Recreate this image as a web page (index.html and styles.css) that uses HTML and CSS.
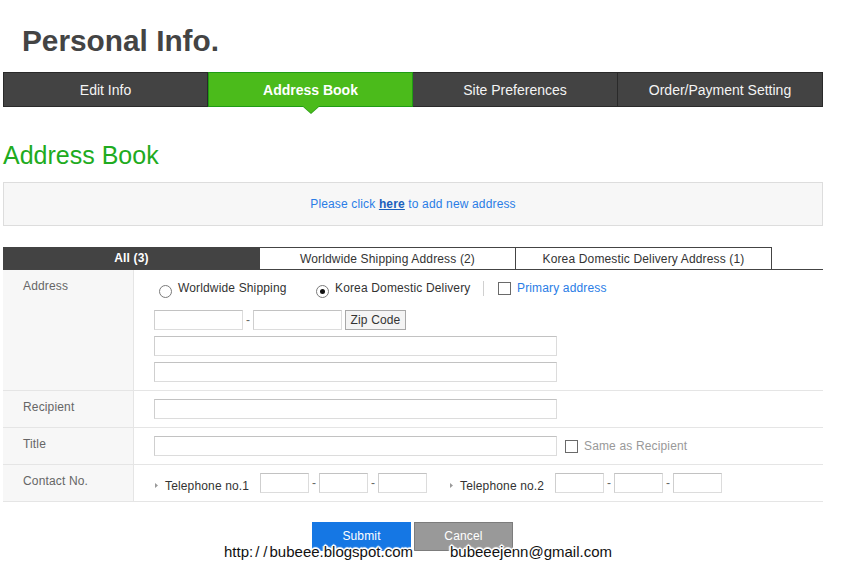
FILE: index.html
```html
<!DOCTYPE html>
<html lang="en">
<head>
<meta charset="utf-8">
<title>Personal Info.</title>
<link rel="stylesheet" href="styles.css">
</head>
<body>
<div class="page">
  <h1 class="title">Personal Info.</h1>
  <nav class="tabs">
    <a class="tab">Edit Info</a>
    <a class="tab active">Address Book</a>
    <a class="tab">Site Preferences</a>
    <a class="tab">Order/Payment Setting</a>
  </nav>

  <h2 class="section-title">Address Book</h2>
  <div class="notice">Please click&nbsp;<a class="here">here</a>&nbsp;to add new address</div>

  <div class="subtabs">
    <div class="subtab active">All (3)</div>
    <div class="subtab">Worldwide Shipping Address (2)</div>
    <div class="subtab">Korea Domestic Delivery Address (1)</div>
  </div>

  <div class="form">
    <div class="row">
      <div class="label">Address</div>
      <div class="field field-address">
        <div class="radio-line">
          <div class="opt opt-ww"><span class="radio"></span><span class="opt-text">Worldwide Shipping</span></div>
          <div class="opt opt-kr"><span class="radio checked"></span><span class="opt-text">Korea Domestic Delivery</span></div>
          <span class="sep"></span>
          <span class="check"></span><span class="primary">Primary address</span>
        </div>
        <div class="line">
          <span class="inp inp-zip"></span><span class="dash">-</span><span class="inp inp-zip"></span>
          <span class="zip-btn">Zip Code</span>
        </div>
        <div class="line"><span class="inp inp-wide"></span></div>
        <div class="line"><span class="inp inp-wide"></span></div>
      </div>
    </div>
    <div class="row">
      <div class="label">Recipient</div>
      <div class="field"><span class="inp inp-wide"></span></div>
    </div>
    <div class="row">
      <div class="label">Title</div>
      <div class="field">
        <span class="inp inp-wide"></span>
        <span class="check check-same"></span><span class="same">Same as Recipient</span>
      </div>
    </div>
    <div class="row">
      <div class="label">Contact No.</div>
      <div class="field">
        <div class="tel-group">
          <div class="tel-label"><svg class="arrow" width="3" height="5" viewBox="0 0 3 5"><path d="M0 0L3 2.5L0 5Z" fill="#9a9a9a"/></svg><span>Telephone no.1</span></div>
          <span class="inp inp-tel"></span><span class="dash">-</span><span class="inp inp-tel"></span><span class="dash">-</span><span class="inp inp-tel"></span>
        </div>
        <div class="tel-group tel-group-2">
          <div class="tel-label"><svg class="arrow" width="3" height="5" viewBox="0 0 3 5"><path d="M0 0L3 2.5L0 5Z" fill="#9a9a9a"/></svg><span>Telephone no.2</span></div>
          <span class="inp inp-tel"></span><span class="dash">-</span><span class="inp inp-tel"></span><span class="dash">-</span><span class="inp inp-tel"></span>
        </div>
      </div>
    </div>
  </div>

  <div class="actions">
    <button class="btn btn-submit">Submit</button>
    <button class="btn btn-cancel">Cancel</button>
  </div>
</div>

<div class="wm wm-url">http:<span class="sl">/</span><span class="sl">/</span>bubeee.blogspot.com</div>
<div class="wm wm-mail">bubeeejenn@gmail.com</div>
</body>
</html>
```

FILE: styles.css
```css
html, body {
  margin: 0;
  padding: 0;
  background: #ffffff;
}
body {
  font-family: "Liberation Sans", Arial, sans-serif;
  font-size: 12px;
  letter-spacing: 0.15px;
  color: #333333;
  position: relative;
  width: 851px;
  height: 571px;
  overflow: hidden;
}
.page {
  width: 820px;
  margin-left: 3px;
}
.title {
  margin: 0 0 16px 0;
  padding: 26px 0 0 19px;
  font-size: 29.8px;
  line-height: 30px;
  letter-spacing: 0;
  font-weight: bold;
  color: #444444;
}

/* main tabs */
.tabs {
  display: grid;
  grid-template-columns: repeat(4, 1fr);
  height: 35px;
}
.tab {
  box-sizing: border-box;
  background: #434343;
  border: 1px solid #2a2a2a;
  color: #f4f4f4;
  font-size: 14px;
  letter-spacing: 0;
  display: flex;
  align-items: center;
  justify-content: center;
}
.tab + .tab {
  border-left: 0;
}
.tab.active {
  position: relative;
  background: #4bbb1b;
  border: 1px solid #1f9c14;
  color: #ffffff;
  font-weight: bold;
}
.tab.active::before {
  content: "";
  position: absolute;
  left: 50%;
  top: 100%;
  margin-left: -9px;
  border-left: 9px solid transparent;
  border-right: 9px solid transparent;
  border-top: 8px solid #2a9e18;
}
.tab.active::after {
  content: "";
  position: absolute;
  left: 50%;
  top: 100%;
  margin-left: -8px;
  border-left: 8px solid transparent;
  border-right: 8px solid transparent;
  border-top: 7px solid #4bbb1b;
}

.section-title {
  margin: 36px 0 0 0;
  font-size: 25px;
  line-height: 25px;
  letter-spacing: 0;
  font-weight: normal;
  color: #20ab20;
}
.notice {
  margin-top: 14px;
  height: 42px;
  border: 1px solid #dddddd;
  background: #f7f7f7;
  display: flex;
  align-items: center;
  justify-content: center;
  color: #2a7de6;
}
.here {
  color: #1b5fbd;
  font-weight: bold;
  text-decoration: underline;
}

/* sub tabs */
.subtabs {
  margin-top: 21px;
  display: flex;
  height: 22px;
  border-bottom: 1px solid #444444;
}
.subtab {
  box-sizing: border-box;
  width: 256px;
  border-top: 1px solid #444444;
  border-right: 1px solid #444444;
  display: flex;
  align-items: center;
  justify-content: center;
  color: #333333;
}
.subtab.active {
  width: 257px;
  border: 0;
  background: #434343;
  color: #ffffff;
  font-weight: bold;
}

/* form */
.row {
  display: flex;
  border-bottom: 1px solid #e5e5e5;
}
.label {
  box-sizing: border-box;
  width: 131px;
  flex: none;
  background: #f7f7f7;
  border-right: 1px solid #e5e5e5;
  padding: 9px 0 0 20px;
  line-height: 15px;
  color: #666666;
}
.field {
  flex: 1;
  display: flex;
  align-items: center;
  padding: 8px 0 8px 20px;
  min-height: 20px;
}
.field-address {
  display: block;
  padding: 10px 0 8px 20px;
}
.radio-line {
  display: flex;
  align-items: flex-start;
  height: 16px;
  line-height: 16px;
  margin-bottom: 14px;
}
.opt {
  display: flex;
  align-items: flex-start;
  box-sizing: border-box;
}
.opt-ww {
  width: 157px;
  margin-left: 5px;
}
.opt-kr {
  width: 167px;
}
.radio {
  box-sizing: border-box;
  width: 13px;
  height: 13px;
  margin-top: 5px;
  margin-right: 6px;
  border: 1px solid #7a7a7a;
  border-radius: 50%;
  background: #ffffff;
  display: flex;
  align-items: center;
  justify-content: center;
}
.radio.checked::after {
  content: "";
  width: 5px;
  height: 5px;
  border-radius: 50%;
  background: #111111;
}
.opt-text {
  color: #333333;
}
.sep {
  width: 1px;
  height: 15px;
  margin-top: 1px;
  margin-right: 14px;
  background: #d0d0d0;
}
.check {
  box-sizing: border-box;
  width: 13px;
  height: 13px;
  border: 1px solid #6a6a6a;
  background: #ffffff;
  margin-top: 2px;
  margin-right: 6px;
  flex: none;
}
.primary {
  color: #2a7de6;
}
.check-same {
  margin: 0 6px 0 8px;
}
.same {
  color: #999999;
}
.line {
  display: flex;
  align-items: center;
  height: 20px;
  margin-bottom: 6px;
}
.line:last-child {
  margin-bottom: 0;
}
.inp {
  box-sizing: border-box;
  display: block;
  height: 20px;
  flex: none;
  background: #ffffff;
  border: 1px solid #dcdcdc;
  border-top-color: #c2c2c2;
  border-left-color: #cfcfcf;
}
.inp-zip {
  width: 89px;
}
.inp-wide {
  width: 403px;
}
.inp-tel {
  width: 49px;
}
.dash {
  width: 10px;
  text-align: center;
  color: #666666;
  flex: none;
}
.zip-btn {
  box-sizing: border-box;
  margin-left: 3px;
  width: 61px;
  height: 20px;
  border: 1px solid #a8a8a8;
  background: #f4f4f4;
  display: flex;
  align-items: center;
  justify-content: center;
  color: #333333;
}
.tel-group {
  display: flex;
  align-items: center;
}
.tel-group-2 {
  margin-left: 22px;
}
.tel-label {
  width: 105px;
  display: flex;
  align-items: center;
  color: #333333;
  margin-left: 1px;
  padding-top: 5px;
}
.arrow {
  display: block;
  margin-right: 7px;
}

/* actions */
.actions {
  margin-top: 20px;
  display: flex;
  justify-content: center;
  gap: 3px;
  padding-right: 1px;
}
.btn {
  box-sizing: border-box;
  width: 99px;
  height: 29px;
  margin: 0;
  padding: 0 0 2px 0;
  font-family: "Liberation Sans", Arial, sans-serif;
  font-size: 12px;
  letter-spacing: 0.15px;
  color: #ffffff;
  border: 1px solid;
}
.btn-submit {
  background: #1577e4;
  border-color: #1577e4;
}
.btn-cancel {
  background: #999999;
  border-color: #7c7c7c;
}

/* watermark overlay */
.wm {
  position: absolute;
  top: 544px;
  font-family: "Liberation Sans", Arial, sans-serif;
  font-size: 15px;
  line-height: 15px;
  letter-spacing: 0;
  color: #111111;
  white-space: nowrap;
  text-shadow: 1px 0 0 #fff, -1px 0 0 #fff, 0 1px 0 #fff, 0 -1px 0 #fff,
    1px 1px 0 #fff, -1px -1px 0 #fff, 1px -1px 0 #fff, -1px 1px 0 #fff,
    2px 0 1px #fff, -2px 0 1px #fff, 0 2px 1px #fff, 0 -2px 1px #fff;
}
.wm-url {
  left: 224px;
}
.wm-url .sl {
  padding: 0 2px;
}
.wm-mail {
  left: 450px;
}
```
